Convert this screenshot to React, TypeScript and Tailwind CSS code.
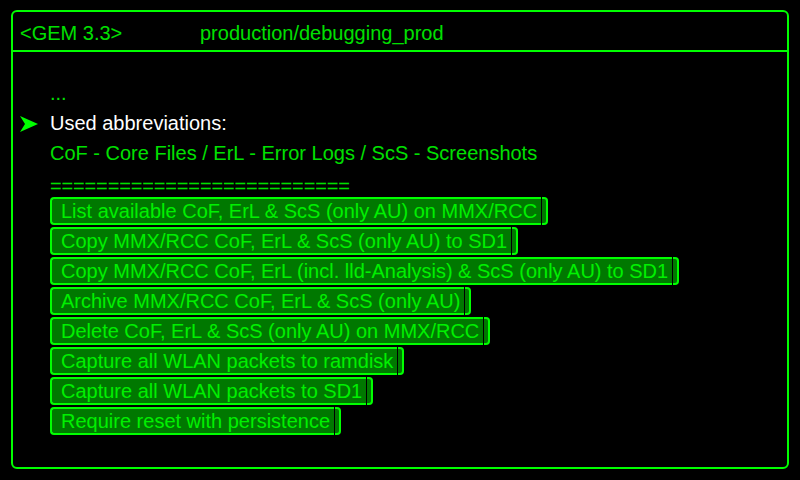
const buttons = [
    'List available CoF, ErL & ScS (only AU) on MMX/RCC',
    'Copy MMX/RCC CoF, ErL & ScS (only AU) to SD1',
    'Copy MMX/RCC CoF, ErL (incl. lld-Analysis) & ScS (only AU) to SD1',
    'Archive MMX/RCC CoF, ErL & ScS (only AU)',
    'Delete CoF, ErL & ScS (only AU) on MMX/RCC',
    'Capture all WLAN packets to ramdisk',
    'Capture all WLAN packets to SD1',
    'Require reset with persistence',
]

function MenuButton({ label }: { label: string }) {
    return (
        <div className="flex h-[28px] w-fit">
            <div className="h-full pl-[9px] pr-[4px] flex items-center bg-[#007800] border-y-2 border-l-2 border-[#00ff00] rounded-l-[4px] text-[#00f000] whitespace-nowrap">
                {label}
            </div>
            <div className="h-full w-px bg-black" />
            <div className="h-full w-[6px] bg-[#007800] border-y-2 border-r-2 border-[#00ff00] rounded-r-[4px]" />
        </div>
    )
}

export default function App() {
    return (
        <div
            className="w-[800px] h-[480px] bg-black pt-[10px] pl-[11px] pr-[11px] pb-[11px] text-[20px] leading-[30px]"
            style={{ fontFamily: '"Liberation Sans", Arial, sans-serif' }}
        >
            <div className="h-full border-2 border-[#00ff00] rounded-[6px] flex flex-col">
                {/* Header */}
                <div className="h-[40px] border-b-2 border-[#00ff00] flex items-center pt-[4px] pl-[7px] text-[#00e000]">
                    <span className="w-[180px]">&lt;GEM 3.3&gt;</span>
                    <span>production/debugging_prod</span>
                </div>

                <div className="pt-[26px] pl-[37px] flex flex-col">
                    <div className="text-[#00e000]">...</div>
                    <div className="relative text-white">
                        <svg className="absolute left-[-30px] top-[8px]" width="18" height="16" viewBox="0 0 18 16">
                            <polygon points="0,0 18,8 0,16 5,8" fill="#00ff00" />
                        </svg>
                        Used abbreviations:
                    </div>
                    <div className="text-[#00e000]">CoF - Core Files / ErL - Error Logs / ScS - Screenshots</div>
                    <div className="text-[#00e000] h-[29px] pt-[3px] tracking-[-0.15px]">==========================</div>
                    <div className="flex flex-col gap-[2px]">
                        {buttons.map((b) => (
                            <MenuButton key={b} label={b} />
                        ))}
                    </div>
                </div>
            </div>
        </div>
    )
}
